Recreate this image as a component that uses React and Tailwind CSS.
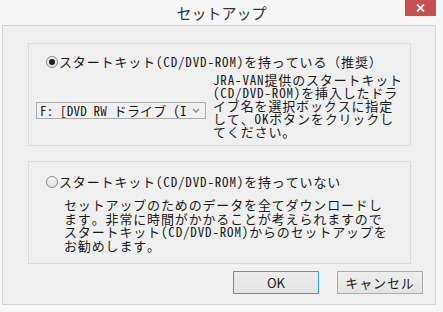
export default function App() {
  const jp = "font-['Noto_Sans_Mono_CJK_JP','Noto_Sans_CJK_JP',sans-serif]";
  return (
    <div className={`relative w-[443px] h-[312px] bg-[#f7f7f7] overflow-hidden flex flex-col text-[#1a1a1a] ${jp}`}>
      <div className="h-[25px] flex items-center justify-center text-[15px] text-[#333] font-['Noto_Sans_CJK_JP',sans-serif] pt-[1px]">
        セットアップ
      </div>
      <div className="absolute right-[7px] top-0 w-[31px] h-[16px] bg-[#c75050] flex items-center justify-center">
        <svg width="9" height="8" viewBox="0 0 9 8">
          <path d="M1 0.5 L8 7.5 M8 0.5 L1 7.5" stroke="white" strokeWidth="1.8" />
        </svg>
      </div>
      <div className="ml-[2px] w-[434px] h-[280px] border border-[#d4d4d4] bg-[#f0f0f0] pt-[17px] pl-[25px] flex flex-col">
        {/* group 1 */}
        <div className="w-[383px] h-[103px] border border-[#dcdcdc] pt-[11px] pl-[17px] flex flex-col">
          <div className="flex items-center h-[14px]">
            <span className="w-[12px] h-[12px] rounded-full border border-[#8a8a8a] bg-gradient-to-b from-[#f6f6f6] to-[#e2e2e2] flex items-center justify-center">
              <span className="w-[6px] h-[6px] rounded-full bg-[#1f1f1f]" />
            </span>
            <span className="ml-[1px] text-[13px] leading-[14px] tracking-[0.85px] whitespace-nowrap">
              スタートキット(CD/DVD-ROM)を持っている（推奨）
            </span>
          </div>
          <div className="flex items-start mt-[4px] -ml-[10px]">
            <div className="mt-[29px] w-[170px] h-[17px] border border-[#acacac] bg-[#f0f0f0] flex items-center overflow-hidden">
              <span className="pl-[3px] text-[13px] leading-[15px] tracking-[0.2px] whitespace-nowrap overflow-hidden w-[152px]">
                F: [DVD RW ドライブ (I
              </span>
              <svg className="ml-[3px]" width="8" height="6" viewBox="0 0 8 6">
                <path d="M1 1 L4 4 L7 1" stroke="#7a8aa0" strokeWidth="1.4" fill="none" />
              </svg>
            </div>
            <div className="ml-[7px] text-[13px] leading-[13px] tracking-[0.85px] whitespace-nowrap">
              <div>JRA-VAN提供のスタートキット</div>
              <div>(CD/DVD-ROM)を挿入したドラ</div>
              <div>イブ名を選択ボックスに指定</div>
              <div>して、OKボタンをクリックし</div>
              <div>てください。</div>
            </div>
          </div>
        </div>
        {/* group 2 */}
        <div className="mt-[15px] w-[383px] h-[103px] border border-[#dcdcdc] pt-[13px] pl-[17px] flex flex-col">
          <div className="flex items-center h-[14px]">
            <span className="w-[12px] h-[12px] rounded-full border border-[#8a8a8a] bg-gradient-to-b from-[#f6f6f6] to-[#e2e2e2]" />
            <span className="ml-[1px] text-[13px] leading-[14px] tracking-[0.85px] whitespace-nowrap">
              スタートキット(CD/DVD-ROM)を持っていない
            </span>
          </div>
          <div className="mt-[9px] ml-[18px] text-[13px] leading-[13.5px] tracking-[0.85px] whitespace-nowrap">
            <div>セットアップのためのデータを全てダウンロードし</div>
            <div>ます。非常に時間がかかることが考えられますので</div>
            <div>スタートキット(CD/DVD-ROM)からのセットアップを</div>
            <div>お勧めします。</div>
          </div>
        </div>
        {/* buttons */}
        <div className="flex mt-[7px] ml-[205px] gap-[18px]">
          <div className="w-[86px] h-[23px] border border-[#3399ff] bg-gradient-to-b from-[#ececec] to-[#e4e4e4] flex items-center justify-center text-[13px] font-['Noto_Sans_CJK_JP',sans-serif]">
            OK
          </div>
          <div className="w-[86px] h-[23px] border border-[#adadad] bg-gradient-to-b from-[#efefef] to-[#e3e3e3] flex items-center justify-center text-[13px] tracking-[0.85px]">
            キャンセル
          </div>
        </div>
      </div>
    </div>
  );
}
